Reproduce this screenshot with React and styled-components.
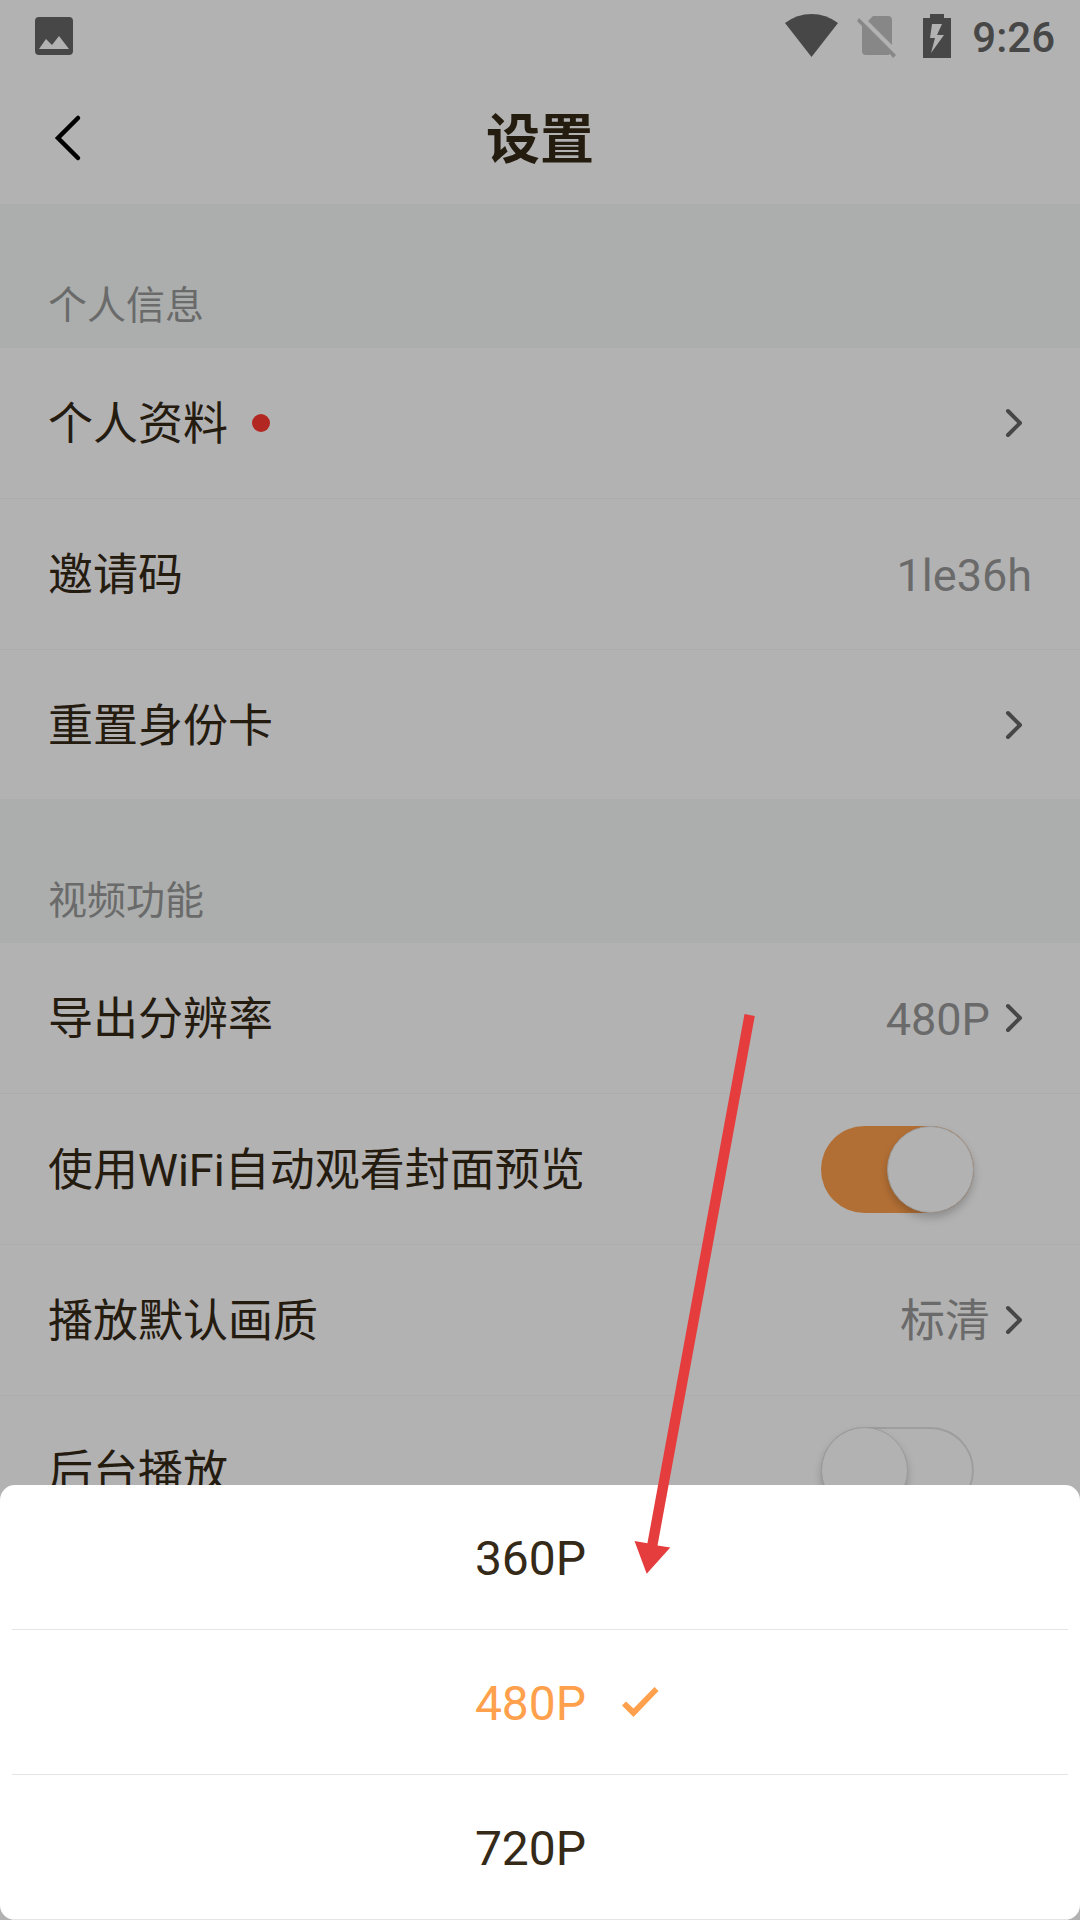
import { useState } from "react";
import styled, { createGlobalStyle } from "styled-components";

const GlobalStyle = createGlobalStyle`
  *,
  *::before {
    box-sizing: border-box;
  }

  body {
    margin: 0;
    background: white;
    color: #352918;
    font-family: Roboto, "Noto Sans CJK SC", sans-serif;
  }

  button {
    margin: 0;
    padding: 0;
    border: 0;
    background: none;
    color: inherit;
    font: inherit;
    cursor: pointer;
  }
`;

const Page = styled.div`
  min-height: 100vh;
  background: white;
`;

const StatusBar = styled.div`
  display: flex;
  align-items: center;
  height: 72px;
  padding: 0 25px 0 35px;
  color: #666;
`;

const StatusIcons = styled.div`
  display: flex;
  align-items: center;
  margin-left: auto;
`;

const StatusIcon = styled.svg`
  display: block;
  width: ${props => props.$width}px;
  height: 44px;
  margin-right: ${props => props.$gap || 0}px;
  fill: ${props => props.$faded ? '#c2c2c2' : '#666'};
`;

const StatusTime = styled.span`
  padding-top: 4px;
  font-size: 42px;
  font-weight: 500;
  line-height: 44px;
`;

const Header = styled.header`
  display: grid;
  grid-template-columns: 132px 1fr 132px;
  align-items: center;
  height: 132px;
`;

const BackButton = styled.button`
  display: flex;
  align-items: center;
  height: 100%;
  padding-left: 48px;
`;

const Title = styled.h1`
  margin: 0;
  padding-top: 6px;
  font-size: 54px;
  font-weight: 700;
  line-height: 80px;
  text-align: center;
`;

const SectionTitle = styled.h2`
  display: flex;
  align-items: flex-end;
  height: 144px;
  margin: 0;
  padding: 0 48px 14px;
  background: #f5f9f7;
  color: #999;
  font-size: 39px;
  font-weight: 400;
  line-height: 56px;
`;

const Row = styled.div`
  display: flex;
  align-items: center;
  width: 100%;
  height: 151px;
  padding: 0 48px;
  border-bottom: 1px solid #f6f6f6;
  font-size: 45px;
  line-height: 66px;
  text-align: left;

  &:last-child {
    height: 149px;
    border-bottom: 0;
  }
`;

const RowButton = styled(Row).attrs({ as: 'button', type: 'button' })`
  border-bottom: 1px solid #f6f6f6;
`;

const ToggleRow = styled(Row).attrs({ as: 'label' })`
  padding-right: 106px;
`;

const RowText = styled.span`
  padding-top: 4px;
`;

const Dot = styled.span`
  width: 18px;
  height: 18px;
  margin-left: 24px;
  border-radius: 50%;
  background: #ff3930;
`;

const RowEnd = styled.span`
  display: flex;
  align-items: center;
  gap: 6px;
  margin-left: auto;
  color: #999;
`;

const Switch = styled.input.attrs({ type: 'checkbox', role: 'switch' })`
  appearance: none;
  display: flex;
  width: 153px;
  height: 87px;
  margin: 0 0 0 auto;
  border-radius: 44px;
  background: white;
  box-shadow: inset 0 0 0 2px #e2e2e2;

  &::before {
    content: "";
    width: 87px;
    height: 87px;
    border: 1px solid #dedede;
    border-radius: 50%;
    background: white;
    box-shadow: 0 5px 9px rgba(0, 0, 0, 0.2);
  }

  &:checked {
    justify-content: flex-end;
    background: #ffa04c;
    box-shadow: none;
  }
`;

const Mask = styled.div`
  position: fixed;
  inset: 0;
  display: flex;
  align-items: flex-end;
  background: rgba(0, 0, 0, 0.3);
`;

const Sheet = styled.div`
  width: 100%;
  padding: 0 12px;
  border-radius: 15px;
  background: white;
`;

const Option = styled.button`
  display: grid;
  grid-template-columns: 1fr auto 1fr;
  align-items: center;
  width: 100%;
  height: 145px;
  padding-right: 19px;
  border-bottom: 1px solid #e5e5e5;
  color: ${props => props.$selected ? '#ffa04c' : '#352918'};
  font-size: 48px;
  line-height: 56px;
`;

const OptionLabel = styled.span`
  grid-column: 2;
  padding-top: 4px;
`;

const CheckIcon = styled.svg`
  display: block;
  width: 37px;
  height: 30px;
  margin-left: 36px;
  fill: currentColor;
`;

const PointerArrow = styled.svg`
  position: fixed;
  left: calc(50% + 94px);
  bottom: 346px;
  width: 122px;
  height: 560px;
  fill: #e53d3e;
  pointer-events: none;
`;

function Chevron() {
  return (
    <svg width="36" height="36" viewBox="0 0 36 36" fill="none" aria-hidden="true">
      <path d="M12 6L24 18L12 30" stroke="#666" strokeWidth="4" strokeLinecap="round" strokeLinejoin="round" />
    </svg>
  );
}

function Status() {
  return (
    <StatusBar>
      <StatusIcon $width={38} viewBox="0 0 38 44">
        <path fillRule="evenodd" d="M4 3H34Q38 3 38 7V37Q38 41 34 41H4Q0 41 0 37V7Q0 3 4 3ZM4 35H34L24 22L17 31L11 25Z" />
      </StatusIcon>
      <StatusIcons>
        <StatusIcon $width={53} $gap={19} viewBox="0 0 53 44">
          <path d="M0 9Q12 0 26.500 0T53 9L26.500 43Z" />
        </StatusIcon>
        <StatusIcon $width={39} $gap={27} $faded viewBox="0 0 39 44">
          <path d="M16 2H31Q35 2 35 6V31L11 7ZM2 4L39 41L36 44L33 40Q32 41 31 41H9Q5 41 5 37V12L0 7Z" />
        </StatusIcon>
        <StatusIcon $width={28} $gap={21} viewBox="0 0 28 44">
          <path fillRule="evenodd" d="M7 0H21V4H28V44H0V4H7ZM9 10L7 24H12L8 39L21 21H14L19 10Z" />
        </StatusIcon>
        <StatusTime>9:26</StatusTime>
      </StatusIcons>
    </StatusBar>
  );
}

const resolutions = ['360P', '480P', '720P'];

function App() {
  const [resolution, setResolution] = useState('480P');
  const [autoPreview, setAutoPreview] = useState(true);
  const [background, setBackground] = useState(false);

  return (
    <>
      <GlobalStyle />
      <Page>
        <Status />
        <Header>
          <BackButton type="button" aria-label="返回">
            <svg width="40" height="48" viewBox="0 0 40 48" fill="none">
              <path d="M30 4L10 24L30 44" stroke="black" strokeWidth="4.500" strokeLinecap="round" />
            </svg>
          </BackButton>
          <Title>设置</Title>
        </Header>

        <section>
          <SectionTitle>个人信息</SectionTitle>
          <RowButton>
            <RowText>个人资料</RowText>
            <Dot />
            <RowEnd><Chevron /></RowEnd>
          </RowButton>
          <Row>
            <RowText>邀请码</RowText>
            <RowEnd><RowText>1le36h</RowText></RowEnd>
          </Row>
          <RowButton>
            <RowText>重置身份卡</RowText>
            <RowEnd><Chevron /></RowEnd>
          </RowButton>
        </section>

        <section>
          <SectionTitle>视频功能</SectionTitle>
          <RowButton>
            <RowText>导出分辨率</RowText>
            <RowEnd>
              <RowText>{resolution}</RowText>
              <Chevron />
            </RowEnd>
          </RowButton>
          <ToggleRow>
            <RowText>使用WiFi自动观看封面预览</RowText>
            <Switch checked={autoPreview} onChange={e => setAutoPreview(e.target.checked)} />
          </ToggleRow>
          <RowButton>
            <RowText>播放默认画质</RowText>
            <RowEnd>
              <RowText>标清</RowText>
              <Chevron />
            </RowEnd>
          </RowButton>
          <ToggleRow>
            <RowText>后台播放</RowText>
            <Switch checked={background} onChange={e => setBackground(e.target.checked)} />
          </ToggleRow>
        </section>
      </Page>

      <Mask>
        <Sheet role="dialog" aria-label="导出分辨率">
          {resolutions.map(item => (
            <Option
              key={item}
              type="button"
              $selected={item === resolution}
              aria-pressed={item === resolution}
              onClick={() => setResolution(item)}
            >
              <OptionLabel>{item}</OptionLabel>
              {item === resolution && (
                <CheckIcon viewBox="0 0 37 30">
                  <path d="M0 18.500L4 14.500L11.500 21.500L32.500 0L36.500 4L11.500 30Z" />
                </CheckIcon>
              )}
            </Option>
          ))}
        </Sheet>
      </Mask>

      <PointerArrow viewBox="0 0 122 560" aria-hidden="true">
        <path d="M110.500 0L120.800 2L23.500 531.500L36.300 533.500L12.700 559.700L0.500 527L13.400 529.300Z" />
      </PointerArrow>
    </>
  );
}

export default App;
